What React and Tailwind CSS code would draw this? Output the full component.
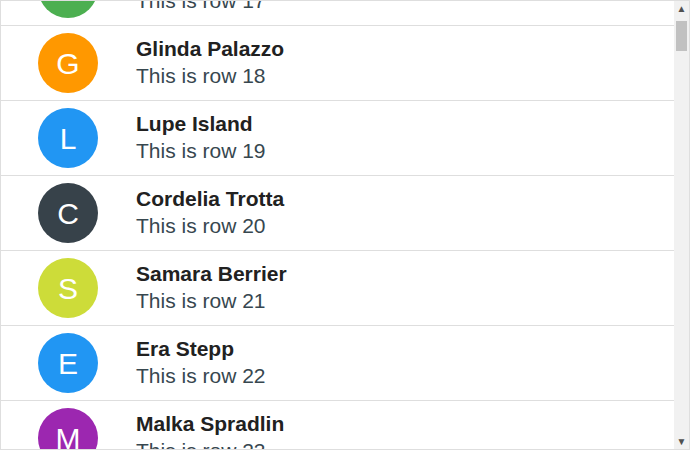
import React from "react";

const rows = [
  { n: 17, name: "Row Seventeen", letter: "R", color: "bg-[#4caf50]" },
  { n: 18, name: "Glinda Palazzo", letter: "G", color: "bg-[#ff9800]" },
  { n: 19, name: "Lupe Island", letter: "L", color: "bg-[#2196f3]" },
  { n: 20, name: "Cordelia Trotta", letter: "C", color: "bg-[#37424a]" },
  { n: 21, name: "Samara Berrier", letter: "S", color: "bg-[#cddc39]" },
  { n: 22, name: "Era Stepp", letter: "E", color: "bg-[#2196f3]" },
  { n: 23, name: "Malka Spradlin", letter: "M", color: "bg-[#9c27b0]" },
];

function Row({ row }) {
  return (
    <div className="flex items-center h-[75px] shrink-0 border-b border-[#dedede]">
      <div className="w-[135px] shrink-0 pl-[37px]">
        <div
          className={`w-[60px] h-[60px] rounded-full flex items-center justify-center text-white text-[30px] ${row.color}`}
        >
          {row.letter}
        </div>
      </div>
      <div className="flex flex-col leading-[27px] text-[21px] pb-[3px]">
        <span className="font-bold text-[#212121]">{row.name}</span>
        <span className="text-[#37474f]">This is row {row.n}</span>
      </div>
    </div>
  );
}

export default function App() {
  return (
    <div
      className="w-[690px] h-[450px] border border-[#dedede] bg-white flex overflow-hidden"
      style={{ fontFamily: '"Liberation Sans", Arial, sans-serif' }}
    >
      <div className="flex-1 min-w-0 overflow-hidden">
        <div className="flex flex-col -mt-[50px]">
          {rows.map((r) => (
            <Row key={r.n} row={r} />
          ))}
        </div>
      </div>

      {/* scrollbar */}
      <div className="w-[15px] shrink-0 bg-[#f1f1f1] flex flex-col">
        <div className="w-[15px] h-[15px] shrink-0 flex items-center justify-center text-[#505050] text-[10px] leading-none">
          ▲
        </div>
        <div className="mt-[5px] mx-[2px] h-[30px] bg-[#c1c1c1]" />
        <div className="flex-1" />
        <div className="w-[15px] h-[15px] shrink-0 flex items-center justify-center text-[#505050] text-[10px] leading-none">
          ▼
        </div>
      </div>
    </div>
  );
}
